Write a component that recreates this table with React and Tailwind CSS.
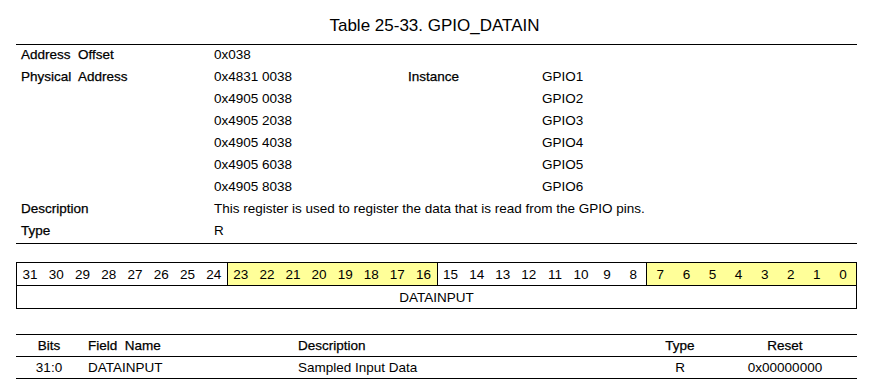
const F = { fontFamily: '"Liberation Sans", Arial, sans-serif' };

const rows = [
  ["Address  Offset", "0x038", "", ""],
  ["Physical  Address", "0x4831 0038", "Instance", "GPIO1"],
  ["", "0x4905 0038", "", "GPIO2"],
  ["", "0x4905 2038", "", "GPIO3"],
  ["", "0x4905 4038", "", "GPIO4"],
  ["", "0x4905 6038", "", "GPIO5"],
  ["", "0x4905 8038", "", "GPIO6"],
];

const groups = [
  { bits: [31, 30, 29, 28, 27, 26, 25, 24], y: false },
  { bits: [23, 22, 21, 20, 19, 18, 17, 16], y: true },
  { bits: [15, 14, 13, 12, 11, 10, 9, 8], y: false },
  { bits: [7, 6, 5, 4, 3, 2, 1, 0], y: true },
];

const lbl = "whitespace-pre [-webkit-text-stroke:0.25px_black]";

export default function App() {
  return (
    <div className="w-[869px] h-[392px] bg-white text-black text-[13.5px] leading-[20px]" style={F}>
      <div className="pt-[16px] h-[44px] text-center text-[17px] leading-[20px]">Table 25-33. GPIO_DATAIN</div>
      <div className="mx-[16px] w-[841px] border-t border-b border-black">
        {rows.map((r, i) => (
          <div key={i} className="flex h-[22px]">
            <div className={`w-[198px] pl-[5px] ${lbl}`}>{r[0]}</div>
            <div className="w-[194px]">{r[1]}</div>
            <div className={`w-[134px] ${lbl}`}>{r[2]}</div>
            <div className="flex-1">{r[3]}</div>
          </div>
        ))}
        <div className="flex h-[22px]">
          <div className={`w-[198px] pl-[5px] ${lbl}`}>Description</div>
          <div className="flex-1">This register is used to register the data that is read from the GPIO pins.</div>
        </div>
        <div className="flex h-[22px]">
          <div className={`w-[198px] pl-[5px] ${lbl}`}>Type</div>
          <div className="flex-1">R</div>
        </div>
      </div>

      <div className="mx-[16px] mt-[18px] w-[841px] border border-black">
        <div className="grid grid-cols-4 h-[22px]">
          {groups.map((g, gi) => (
            <div
              key={gi}
              className={`grid grid-cols-8 ${g.y ? "bg-[#ffff99]" : "bg-white"} ${gi > 0 ? "border-l border-black" : ""}`}
            >
              {g.bits.map((b) => (
                <div key={b} className="text-center pt-[2px] leading-[20px]">{b}</div>
              ))}
            </div>
          ))}
        </div>
        <div className="h-[23px] border-t border-black text-center pt-[2px] leading-[20px]">DATAINPUT</div>
      </div>

      <div className="mx-[16px] mt-[25px] w-[841px] border-t border-b border-black">
        <div className="flex h-[22px] border-b border-black leading-[19px] pt-[1px]">
          <div className={`w-[66px] text-center ${lbl}`}>Bits</div>
          <div className={`w-[210px] pl-[6px] ${lbl}`}>Field  Name</div>
          <div className={`w-[348px] pl-[6px] ${lbl}`}>Description</div>
          <div className={`w-[80px] text-center ${lbl}`}>Type</div>
          <div className={`w-[130px] text-center ${lbl}`}>Reset</div>
        </div>
        <div className="flex h-[21px] leading-[19px] pt-[1px]">
          <div className="w-[66px] text-center">31:0</div>
          <div className="w-[210px] pl-[6px]">DATAINPUT</div>
          <div className="w-[348px] pl-[6px]">Sampled Input Data</div>
          <div className="w-[80px] text-center">R</div>
          <div className="w-[130px] text-center">0x00000000</div>
        </div>
      </div>
    </div>
  );
}
